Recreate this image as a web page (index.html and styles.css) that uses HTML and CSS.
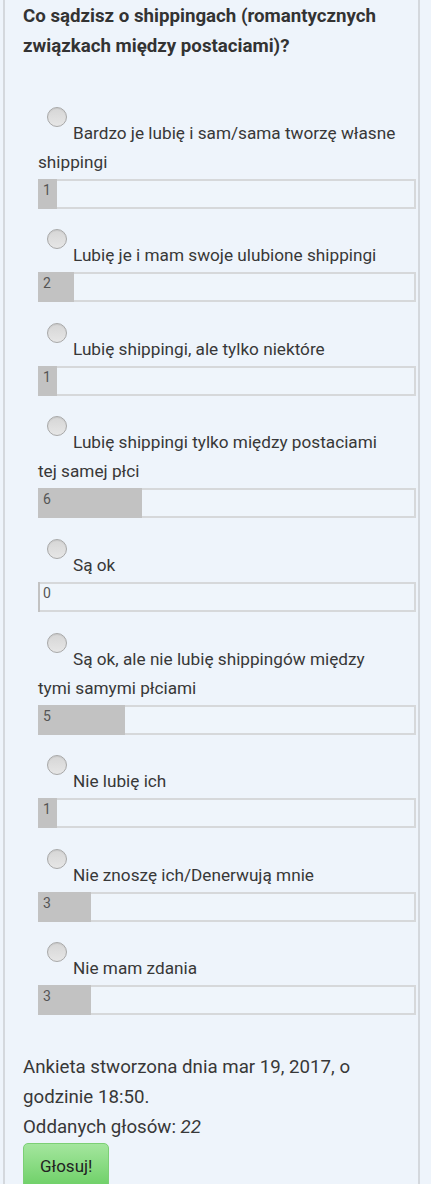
FILE: index.html
```html
<!DOCTYPE html>
<html lang="pl">
<head>
<meta charset="utf-8">
<title>Ankieta</title>
<link rel="stylesheet" href="styles.css">
</head>
<body>
<div class="poll">
  <h2 class="poll-title">Co sądzisz o shippingach (romantycznych związkach między postaciami)?</h2>
  <div class="options">
    <div class="option">
      <div class="label"><input class="radio" type="radio" name="p">Bardzo je lubię i sam/sama tworzę własne shippingi</div>
      <div class="bar"><div class="fill" style="width: calc(4.545% + 2px)"><span class="num">1</span></div></div>
    </div>
    <div class="option">
      <div class="label"><input class="radio" type="radio" name="p">Lubię je i mam swoje ulubione shippingi</div>
      <div class="bar"><div class="fill" style="width: calc(9.091% + 2px)"><span class="num">2</span></div></div>
    </div>
    <div class="option">
      <div class="label"><input class="radio" type="radio" name="p">Lubię shippingi, ale tylko niektóre</div>
      <div class="bar"><div class="fill" style="width: calc(4.545% + 2px)"><span class="num">1</span></div></div>
    </div>
    <div class="option">
      <div class="label"><input class="radio" type="radio" name="p">Lubię shippingi tylko między postaciami tej samej płci</div>
      <div class="bar"><div class="fill" style="width: calc(27.273% + 2px)"><span class="num">6</span></div></div>
    </div>
    <div class="option">
      <div class="label"><input class="radio" type="radio" name="p">Są ok</div>
      <div class="bar"><div class="fill" style="width: calc(0% + 2px)"><span class="num">0</span></div></div>
    </div>
    <div class="option">
      <div class="label"><input class="radio" type="radio" name="p">Są ok, ale nie lubię shippingów między tymi samymi płciami</div>
      <div class="bar"><div class="fill" style="width: calc(22.727% + 2px)"><span class="num">5</span></div></div>
    </div>
    <div class="option">
      <div class="label"><input class="radio" type="radio" name="p">Nie lubię ich</div>
      <div class="bar"><div class="fill" style="width: calc(4.545% + 2px)"><span class="num">1</span></div></div>
    </div>
    <div class="option">
      <div class="label"><input class="radio" type="radio" name="p">Nie znoszę ich/Denerwują mnie</div>
      <div class="bar"><div class="fill" style="width: calc(13.636% + 2px)"><span class="num">3</span></div></div>
    </div>
    <div class="option">
      <div class="label"><input class="radio" type="radio" name="p">Nie mam zdania</div>
      <div class="bar"><div class="fill" style="width: calc(13.636% + 2px)"><span class="num">3</span></div></div>
    </div>
  </div>
  <div class="footer">
    <p class="meta">Ankieta stworzona dnia mar 19, 2017, o godzinie 18:50.</p>
    <p class="meta">Oddanych głosów: <em>22</em></p>
    <button class="vote" type="button">Głosuj!</button>
  </div>
</div>
</body>
</html>
```

FILE: styles.css
```css
html, body {
  margin: 0;
  padding: 0;
  background: #eef4fb;
}

body {
  font-family: Roboto, "Liberation Sans", Arial, sans-serif;
  color: #333;
}

.poll {
  margin-left: 3px;
  width: 417px;
  box-sizing: border-box;
  border-left: 2px solid #d4d8dd;
  border-right: 2px solid #d4d8dd;
  padding: 1px 2px 0 18px;
  background: #eef4fb;
  display: flex;
  flex-direction: column;
}

.poll-title {
  margin: 0;
  padding-right: 10px;
  font-size: 18.7px;
  line-height: 30px;
  font-weight: 700;
  color: #333;
}

.options {
  margin-left: 15px;
  padding-top: 25px;
  display: flex;
  flex-direction: column;
}

.option {
  padding-top: 20.6px;
}

.label {
  font-size: 17.2px;
  line-height: 29px;
  padding-right: 19px;
  color: #383838;
}

.radio {
  -webkit-appearance: none;
  appearance: none;
  display: inline-block;
  width: 20px;
  height: 20px;
  box-sizing: border-box;
  margin: 0 6px 12px 9px;
  vertical-align: baseline;
  border: 1px solid #a8a8a8;
  border-radius: 50%;
  background: linear-gradient(#d6d6d6, #e6e6e6);
  box-shadow: inset 0 1px 1px rgba(0,0,0,0.06);
}

.bar {
  margin-top: 2px;
  height: 30px;
  box-sizing: border-box;
  border: 2px solid #d6d8da;
  background: #eff5fb;
  display: flex;
}

.fill {
  margin: -2px 0 -2px -2px;
  background: #c2c2c2;
  white-space: nowrap;
  overflow: visible;
}

.num {
  display: block;
  padding: 1px 0 0 5px;
  font-size: 14px;
  line-height: 20px;
  color: #555;
}

.footer {
  padding-top: 37px;
}

.meta {
  margin: 0;
  font-size: 18.7px;
  line-height: 30px;
  padding-right: 20px;
  color: #383838;
}

.meta em {
  font-style: italic;
}

.vote {
  margin-top: 1px;
  font-family: Roboto, "Liberation Sans", Arial, sans-serif;
  font-size: 17px;
  line-height: 20px;
  padding: 12px 16px;
  color: #222;
  border: 1px solid #7ccf75;
  border-radius: 5px;
  background: linear-gradient(#a4e69e, #6ccf65);
}
```
